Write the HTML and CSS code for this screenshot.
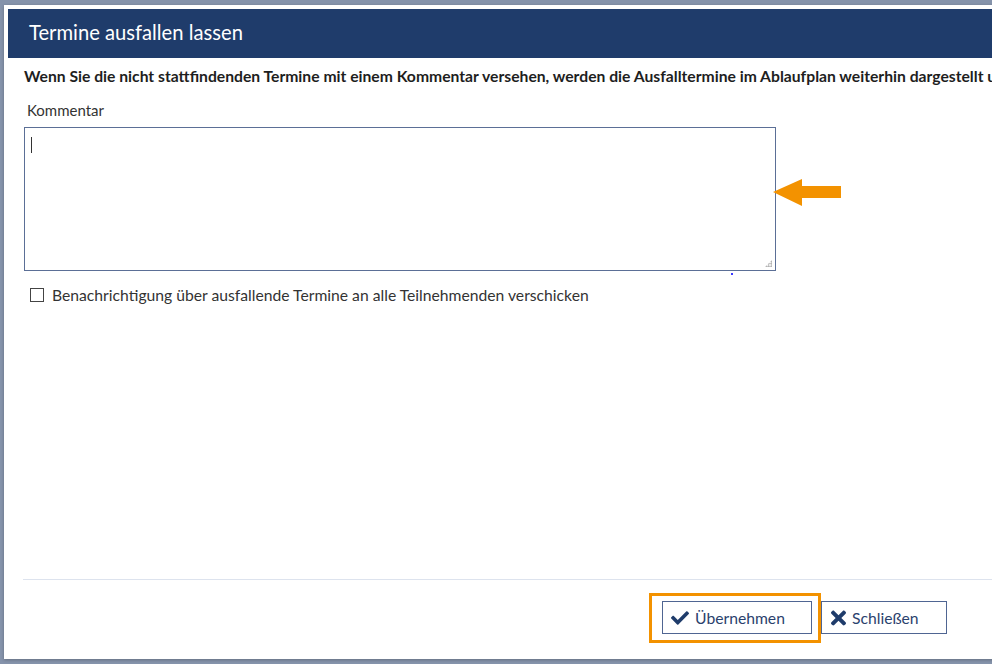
FILE: index.html
```html
<!DOCTYPE html>
<html lang="de">
<head>
    <meta charset="UTF-8">
    <title>Termine ausfallen lassen</title>
    <link rel="stylesheet" href="styles.css">
</head>
<body>
    <div class="dialog">
        <div class="dialog-header">Termine ausfallen lassen</div>

        <div class="dialog-body">
            <p class="intro">Wenn Sie die nicht stattfindenden Termine mit einem Kommentar versehen, werden die Ausfalltermine im Ablaufplan weiterhin dargestellt und mit dem Kommentar versehen.</p>

            <label class="field-label" for="comment">Kommentar</label>
            <div class="textarea-wrap">
                <div class="textarea" id="comment">
                    <span class="caret"></span>
                    <span class="grip"></span>
                </div>
                <svg class="callout-arrow" width="80" height="40" viewBox="0 0 80 40">
                    <polygon points="0,15 29,2 29,9 68,9 68,21 29,21 29,29" fill="#f39200"/>
                </svg>
            </div>

            <div class="check-row">
                <span class="checkbox"></span>
                <span class="check-label">Benachrichtigung über ausfallende Termine an alle Teilnehmenden verschicken</span>
                <span class="stray-dot"></span>
            </div>
        </div>

        <div class="dialog-footer">
            <div class="highlight">
                <button class="btn">
                    <svg class="btn-icon" width="18" height="18" viewBox="0 0 512 512"><path fill="#1f3c6b" d="M173.9 439.4l-166.4-166.4c-10-10-10-26.2 0-36.2l36.2-36.2c10-10 26.2-10 36.2 0L192 312.7 432.1 72.6c10-10 26.2-10 36.2 0l36.2 36.2c10 10 10 26.2 0 36.2l-294.4 294.4c-10 10-26.2 10-36.2 0z"/></svg>
                    Übernehmen
                </button>
            </div>
            <button class="btn btn-close">
                <svg class="btn-icon" width="15" height="22" viewBox="0 0 352 512"><path fill="#1f3c6b" d="M242.7 256l100.1-100.1c12.3-12.3 12.3-32.2 0-44.5l-22.2-22.2c-12.3-12.3-32.2-12.3-44.5 0L176 189.3 75.9 89.2c-12.3-12.3-32.2-12.3-44.5 0L9.2 111.5c-12.3 12.3-12.3 32.2 0 44.5L109.3 256 9.2 356.1c-12.3 12.3-12.3 32.2 0 44.5l22.2 22.2c12.3 12.3 32.2 12.3 44.5 0L176 322.7l100.1 100.1c12.3 12.3 32.2 12.3 44.5 0l22.2-22.2c12.3-12.3 12.3-32.2 0-44.5L242.7 256z"/></svg>
                Schließen
            </button>
        </div>
    </div>
</body>
</html>
```

FILE: styles.css
```css
* {
    margin: 0;
    padding: 0;
    box-sizing: border-box;
}

body {
    font-family: Lato, 'Liberation Sans', sans-serif;
    background: #8593ab;
    height: 664px;
    overflow: hidden;
    padding: 5px 0 0 4px;
    color: #222;
}

.dialog {
    width: 1100px;
    height: 654px;
    background: white;
    padding: 4px 0 0 4px;
    display: flex;
    flex-direction: column;
    box-shadow: 0 1px 3px rgba(0, 0, 0, 0.25);
}

.dialog-header {
    height: 49px;
    background: #1f3c6b;
    color: white;
    font-size: 20.2px;
    line-height: 47px;
    padding-left: 21px;
}

.dialog-body {
    flex: 1;
    padding: 9px 0 0 16px;
}

.intro {
    font-size: 15.7px;
    font-weight: bold;
    line-height: 18px;
    white-space: nowrap;
    color: #1e1e1e;
}

.field-label {
    display: block;
    font-size: 15px;
    line-height: 18px;
    margin: 16px 0 8px 3px;
    color: #333;
}

.textarea-wrap {
    position: relative;
    width: 752px;
}

.textarea {
    position: relative;
    width: 752px;
    height: 144px;
    border: 1px solid #5b6f96;
}

.caret {
    position: absolute;
    left: 6px;
    top: 9px;
    width: 1px;
    height: 16px;
    background: #333;
}

.grip {
    position: absolute;
    right: 3px;
    bottom: 3px;
    width: 7px;
    height: 7px;
    background: radial-gradient(circle, #aaa 0.8px, transparent 1.2px) 0 0 / 2.5px 2.5px;
    clip-path: polygon(100% 0, 100% 100%, 0 100%);
}

.callout-arrow {
    position: absolute;
    left: 749px;
    top: 50px;
}

.check-row {
    position: relative;
    display: flex;
    align-items: center;
    gap: 8px;
    margin: 15px 0 0 6px;
}

.checkbox {
    width: 14px;
    height: 14px;
    border: 1px solid #444;
    background: white;
}

.check-label {
    font-size: 15.7px;
    line-height: 18px;
    color: #333;
}

.stray-dot {
    position: absolute;
    left: 701px;
    top: -13px;
    width: 2px;
    height: 2px;
    background: #3a3aff;
}

.dialog-footer {
    margin: 0 0 16px 15px;
    border-top: 1px solid #dde3ee;
    padding: 13px 0 0 626px;
    display: flex;
    align-items: flex-start;
}

.highlight {
    border: 3px solid #f39200;
    padding: 5px 6px 6px 10px;
}

.btn {
    height: 33px;
    width: 150px;
    background: white;
    border: 1px solid #4f6592;
    color: #2a416d;
    font-family: Lato, 'Liberation Sans', sans-serif;
    font-size: 15.7px;
    display: flex;
    align-items: center;
    gap: 6px;
    padding-left: 8px;
}

.btn-close {
    width: 126px;
    margin-top: 8px;
    padding-left: 9px;
}
```
